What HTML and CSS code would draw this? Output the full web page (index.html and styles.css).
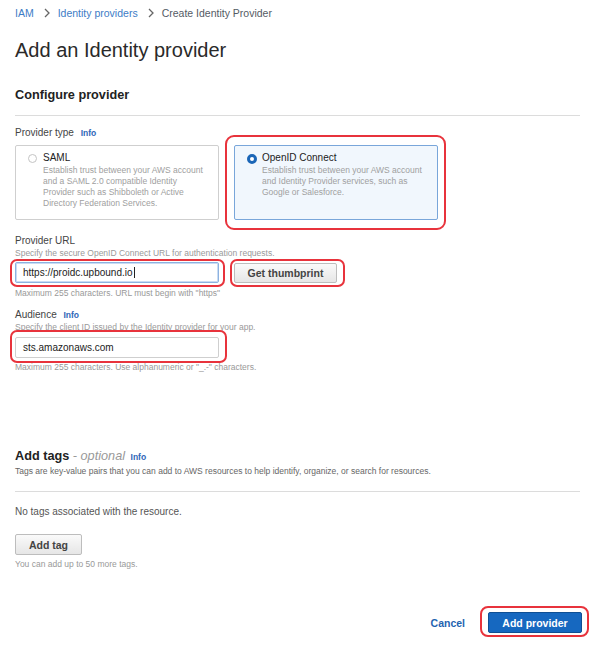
FILE: index.html
```html
<!DOCTYPE html>
<html>
<head>
<meta charset="utf-8">
<link rel="stylesheet" href="styles.css">
</head>
<body>
<div class="page">
  <nav class="crumbs">
    <a class="crumb-link">IAM</a>
    <svg class="chev" width="8" height="10" viewBox="0 0 8 10"><path d="M2 1 L6 5 L2 9" fill="none" stroke="#666" stroke-width="1.3"/></svg>
    <a class="crumb-link">Identity providers</a>
    <svg class="chev" width="8" height="10" viewBox="0 0 8 10"><path d="M2 1 L6 5 L2 9" fill="none" stroke="#666" stroke-width="1.3"/></svg>
    <span class="crumb-cur">Create Identity Provider</span>
  </nav>

  <h1 class="title">Add an Identity provider</h1>

  <h2 class="section-title">Configure provider</h2>
  <div class="divider"></div>

  <div class="label lbl-type">Provider type <span class="info">Info</span></div>
  <div class="cards">
    <div class="card">
      <span class="radio"></span>
      <div class="card-body">
        <div class="card-title">SAML</div>
        <div class="card-desc">Establish trust between your AWS account and a SAML 2.0 compatible Identity Provider such as Shibboleth or Active Directory Federation Services.</div>
      </div>
    </div>
    <div class="card-wrap">
      <div class="card selected">
        <span class="radio on"></span>
        <div class="card-body">
          <div class="card-title">OpenID Connect</div>
          <div class="card-desc">Establish trust between your AWS account and Identity Provider services, such as Google or Salesforce.</div>
        </div>
      </div>
      <span class="hl hl-card"></span>
    </div>
  </div>

  <div class="label lbl-url">Provider URL</div>
  <div class="hint">Specify the secure OpenID Connect URL for authentication requests.</div>
  <div class="url-row">
    <div class="field-wrap">
      <div class="input focus">https://proidc.upbound.io<span class="caret"></span></div>
      <span class="hl hl-url"></span>
    </div>
    <div class="btn-wrap">
      <button class="btn">Get thumbprint</button>
      <span class="hl hl-thumb"></span>
    </div>
  </div>
  <div class="hint hint-after">Maximum 255 characters. URL must begin with "https"</div>

  <div class="label lbl-aud">Audience <span class="info">Info</span></div>
  <div class="hint">Specify the client ID issued by the Identity provider for your app.</div>
  <div class="field-wrap aud">
    <div class="input">sts.amazonaws.com</div>
    <span class="hl hl-aud"></span>
  </div>
  <div class="hint hint-after2">Maximum 255 characters. Use alphanumeric or "_.-" characters.</div>

  <h2 class="section-title tags-title">Add tags <span class="optional">- optional</span> <span class="info">Info</span></h2>
  <div class="hint tags-desc">Tags are key-value pairs that you can add to AWS resources to help identify, organize, or search for resources.</div>
  <div class="divider div2"></div>
  <div class="no-tags">No tags associated with the resource.</div>
  <button class="btn add-tag">Add tag</button>
  <div class="hint hint-tags">You can add up to 50 more tags.</div>

  <div class="footer">
    <a class="cancel">Cancel</a>
    <div class="btn-wrap">
      <button class="btn primary">Add provider</button>
      <span class="hl hl-add"></span>
    </div>
  </div>
</div>
</body>
</html>
```

FILE: styles.css
```css
* { box-sizing: border-box; }
html, body { margin: 0; padding: 0; background: #fff; }
body { font-family: "Liberation Sans", Arial, sans-serif; color: #333; }
.page { padding: 0 20px 0 15px; width: 600px; height: 648px; }

.crumbs { display: flex; align-items: center; margin-top: 6px; height: 14px; font-size: 10.5px; line-height: 14px; }
.crumb-link { color: #3d7cc6; }
.crumb-cur { color: #545b64; }
.chev { margin: 0 7px 0 9px; }

.title { font-size: 20px; font-weight: normal; line-height: 24px; margin: 18px 0 0; color: #2a2a2a; }

.section-title { font-size: 12.7px; font-weight: bold; line-height: 16px; margin: 25px 0 0; color: #222; }
.divider { height: 1px; background: #dcdcdc; margin-top: 12px; }

.label { font-size: 10px; line-height: 14px; color: #444; }
.lbl-type { margin-top: 10px; }
.info { color: #2f66b8; font-weight: bold; font-size: 8.5px; margin-left: 4px; }

.cards { display: flex; gap: 15px; margin-top: 5px; }
.card { width: 204px; height: 75px; border: 1px solid #cfcfcf; border-radius: 2px; display: flex; padding: 5px 8px 0 12px; background: #fff; }
.card.selected { background: #f1f7fd; border-color: #79a6da; }
.card-wrap { position: relative; }
.radio { width: 9px; height: 9px; border-radius: 50%; border: 1px solid #c4c4c4; flex: none; margin-top: 3px; margin-right: 6px; background: #fff; }
.radio.on { border: 3px solid #1b66b7; width: 10px; height: 10px; margin-top: 2.5px; margin-left: -0.5px; margin-right: 5.5px; }
.card-title { font-size: 10px; line-height: 14px; color: #222; }
.card-desc { font-size: 8.5px; line-height: 11px; color: #a0a0a0; }

.hl { position: absolute; border: 2px solid #e8333c; border-radius: 7px; pointer-events: none; }
.hl-card { top: -10px; left: -9px; right: -8px; bottom: -10px; border-radius: 9px; }

.lbl-url { margin-top: 14px; }
.hint { font-size: 8.5px; line-height: 10px; color: #999; }
.url-row { display: flex; gap: 15px; margin-top: 4px; align-items: flex-start; }
.field-wrap { position: relative; width: 204px; }
.input { width: 204px; height: 21px; border: 1px solid #cfcfcf; border-radius: 2px; font-size: 10px; line-height: 19px; padding: 0 7px; color: #222; background: #fff; }
.input.focus { border-color: #8db2e0; box-shadow: inset 0 0 0 1px #c9dcf3; }
.caret { display: inline-block; width: 1px; height: 11px; background: #222; vertical-align: -2px; margin-left: 1px; }
.hl-url { top: -3px; left: -5px; right: -6px; bottom: -4px; }
.btn-wrap { position: relative; }
.btn { font-family: "Liberation Sans", Arial, sans-serif; font-weight: bold; font-size: 10.5px; color: #444; height: 20px; padding: 0; border: 1px solid #bdbdbd; border-radius: 2px; background: linear-gradient(#fafafa, #e6e6e6); display: block; }
.btn-wrap .btn { width: 103px; margin-top: 1px; }
.hl-thumb { top: -3px; left: -4px; right: -8px; bottom: -4px; }
.hint-after { margin-top: 5px; }

.lbl-aud { margin-top: 10px; }
.aud { margin-top: 5px; }
.hl-aud { top: -7px; left: -5px; right: -8px; bottom: -5px; }
.hint-after2 { margin-top: 4px; }

.tags-title { margin-top: 76px; }
.optional { font-style: italic; font-weight: normal; color: #999; }
.tags-title .info { margin-left: 2px; }
.tags-desc { margin-top: 1px; line-height: 11px; color: #666; }
.div2 { margin-top: 14px; }
.no-tags { font-size: 10px; line-height: 14px; color: #555; margin-top: 13px; }
.btn.add-tag { width: 67px; height: 21px; margin-top: 15px; }
.hint-tags { margin-top: 4px; }

.footer { display: flex; justify-content: flex-end; align-items: center; gap: 23px; margin-top: 43px; margin-right: -2px; }
.cancel { color: #1f63b0; font-weight: bold; font-size: 10.5px; }
.btn-wrap .btn.primary { width: 94px; height: 21px; margin-top: 0; background: #1668c0; border: 1px solid #0f4f94; color: #fff; }
.hl-add { top: -6px; left: -8px; right: -7px; bottom: -4px; border-radius: 8px; }
```
